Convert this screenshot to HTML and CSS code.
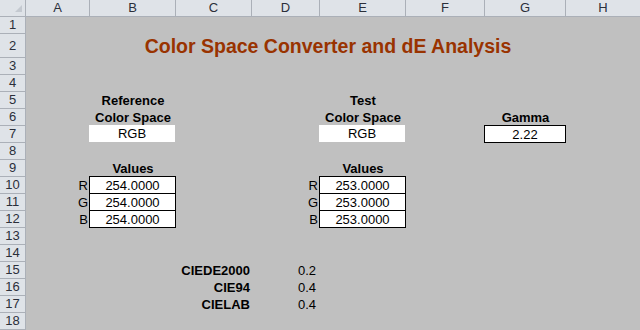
FILE: index.html
```html
<!DOCTYPE html>
<html lang="en">
<head>
  <meta charset="UTF-8" />
  <meta name="viewport" content="width=device-width, initial-scale=1.0" />
  <title>Color Space Converter and dE Analysis</title>
  <link rel="stylesheet" href="styles.css">
</head>
<body>
  <div class="sheet">
    <!-- column headers -->
    <div class="hdr corner">
      <svg width="25" height="16" viewBox="0 0 25 16"><polygon points="22,5 22,12 15,12" fill="#c4c9d0" /></svg>
    </div>
    <div class="hdr col-hdr">A</div>
    <div class="hdr col-hdr">B</div>
    <div class="hdr col-hdr">C</div>
    <div class="hdr col-hdr">D</div>
    <div class="hdr col-hdr">E</div>
    <div class="hdr col-hdr">F</div>
    <div class="hdr col-hdr">G</div>
    <div class="hdr col-hdr last">H</div>

    <!-- row headers -->
    <div class="hdr row-hdr r1">1</div>
    <div class="hdr row-hdr r2">2</div>
    <div class="hdr row-hdr r3">3</div>
    <div class="hdr row-hdr r4">4</div>
    <div class="hdr row-hdr r5">5</div>
    <div class="hdr row-hdr r6">6</div>
    <div class="hdr row-hdr r7">7</div>
    <div class="hdr row-hdr r8">8</div>
    <div class="hdr row-hdr r9">9</div>
    <div class="hdr row-hdr r10">10</div>
    <div class="hdr row-hdr r11">11</div>
    <div class="hdr row-hdr r12">12</div>
    <div class="hdr row-hdr r13">13</div>
    <div class="hdr row-hdr r14">14</div>
    <div class="hdr row-hdr r15">15</div>
    <div class="hdr row-hdr r16">16</div>
    <div class="hdr row-hdr r17">17</div>
    <div class="hdr row-hdr r18">18</div>

    <!-- title -->
    <div class="cell title r2 span-bg">Color Space Converter and dE Analysis</div>

    <!-- reference -->
    <div class="cell label r5 cb">Reference</div>
    <div class="cell label r6 cb">Color Space</div>
    <div class="cell fill r7 cb">RGB</div>

    <!-- test -->
    <div class="cell label r5 ce">Test</div>
    <div class="cell label r6 ce">Color Space</div>
    <div class="cell fill r7 ce">RGB</div>

    <!-- gamma -->
    <div class="cell label r6 cg">Gamma</div>
    <div class="cell box r7 cg">2.22</div>

    <!-- reference values -->
    <div class="cell label r9 cb">Values</div>
    <div class="cell channel r10 ca">R</div>
    <div class="cell channel r11 ca">G</div>
    <div class="cell channel r12 ca">B</div>
    <div class="cell box r10 cb">254.0000</div>
    <div class="cell box r11 cb">254.0000</div>
    <div class="cell box r12 cb">254.0000</div>

    <!-- test values -->
    <div class="cell label r9 ce">Values</div>
    <div class="cell channel r10 cd">R</div>
    <div class="cell channel r11 cd">G</div>
    <div class="cell channel r12 cd">B</div>
    <div class="cell box r10 ce">253.0000</div>
    <div class="cell box r11 ce">253.0000</div>
    <div class="cell box r12 ce">253.0000</div>

    <!-- delta E results -->
    <div class="cell metric r15 cc">CIEDE2000</div>
    <div class="cell number r15 cd">0.2</div>
    <div class="cell metric r16 cc">CIE94</div>
    <div class="cell number r16 cd">0.4</div>
    <div class="cell metric r17 cc">CIELAB</div>
    <div class="cell number r17 cd">0.4</div>
  </div>
</body>
</html>
```

FILE: styles.css
```css
html, body {
  margin: 0;
  padding: 0;
}
body {
  font-family: "Liberation Sans", Arial, sans-serif;
  font-size: 13px;
  color: #000;
  background-color: #c0c0c0;
  overflow: hidden;
}
.sheet {
  display: grid;
  width: 640px;
  height: 330px;
  grid-template-columns: 26px 64px 86px 76px 68px 86px 79px 81px minmax(0, 1fr);
  grid-template-rows: 17px 17px 24px repeat(16, 17px);
  background-color: #c0c0c0;
}

/* headers */
.hdr {
  box-sizing: border-box;
  background-color: #dfe3e8;
  border-right: 1px solid #abb0b8;
  border-bottom: 1px solid #abb0b8;
  color: #2b2f3a;
  text-align: center;
  line-height: 16px;
}
.hdr.last {
  border-right: none;
}
.corner {
  grid-row: 1;
  grid-column: 1;
}
.corner svg {
  display: block;
}
.row-hdr {
  grid-column: 1;
}
.r2.row-hdr {
  line-height: 23px;
}

/* cells */
.cell {
  box-sizing: border-box;
  line-height: 17px;
  white-space: nowrap;
  text-align: center;
}
.title {
  font-size: 19.5px;
  line-height: 24px;
  font-weight: bold;
  color: #993300;
}
.label {
  font-weight: bold;
}
.fill {
  background-color: #fff;
  margin: -1px 1px 1px -1px;
}
.box {
  background-color: #fff;
  border: 1px solid #000;
  margin: -1px 0 0 -1px;
}
.channel {
  text-align: right;
  padding-right: 2px;
}
.metric {
  font-weight: bold;
  text-align: right;
  padding-right: 2px;
}
.number {
  text-align: right;
  padding-right: 4px;
}

/* rows */
.r1 { grid-row: 2; }
.r2 { grid-row: 3; }
.r3 { grid-row: 4; }
.r4 { grid-row: 5; }
.r5 { grid-row: 6; }
.r6 { grid-row: 7; }
.r7 { grid-row: 8; }
.r8 { grid-row: 9; }
.r9 { grid-row: 10; }
.r10 { grid-row: 11; }
.r11 { grid-row: 12; }
.r12 { grid-row: 13; }
.r13 { grid-row: 14; }
.r14 { grid-row: 15; }
.r15 { grid-row: 16; }
.r16 { grid-row: 17; }
.r17 { grid-row: 18; }
.r18 { grid-row: 19; }

/* columns */
.ca { grid-column: 2; }
.cb { grid-column: 3; }
.cc { grid-column: 4; }
.cd { grid-column: 5; }
.ce { grid-column: 6; }
.cf { grid-column: 7; }
.cg { grid-column: 8; }
.span-bg { grid-column: 3 / 9; }
```
